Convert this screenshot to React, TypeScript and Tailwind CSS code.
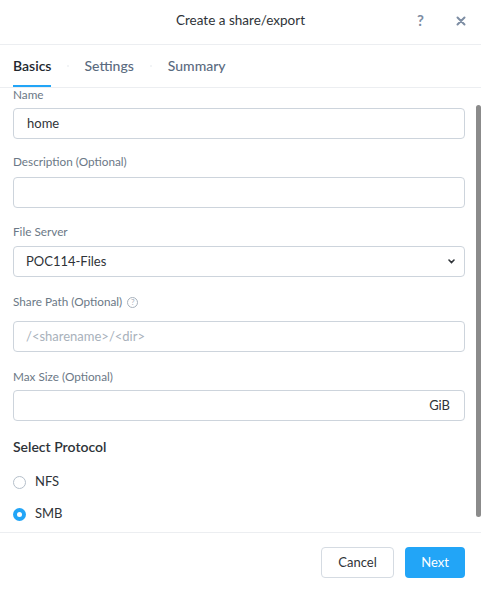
import React from "react";

const font = { fontFamily: "Lato, 'Open Sans', Arial, sans-serif" };

function Label({ children, className = "" }: { children: React.ReactNode; className?: string }) {
  return (
    <div className={`text-[11.75px] leading-[14px] text-[#6b7886] ${className}`}>{children}</div>
  );
}

function Box({ children, className = "" }: { children?: React.ReactNode; className?: string }) {
  return (
    <div
      className={`h-[31px] w-[452px] rounded-[4px] border border-[#cdd4dc] bg-white flex items-center px-[12px] text-[13px] text-[#2f3338] ${className}`}
    >
      {children}
    </div>
  );
}

export default function App() {
  return (
    <div className="w-[481px] h-[589px] bg-white flex flex-col overflow-hidden" style={font}>
      {/* Header */}
      <div className="h-[45px] border-b border-[#eceef1] flex items-center relative shrink-0">
        <div className="w-full text-center text-[13.5px] text-[#2e3338] pb-[4px]">Create a share/export</div>
        <div className="absolute left-[417px] top-[11px] text-[15px] leading-[18px] font-bold text-[#7d8da3]">?</div>
        <svg className="absolute left-[456px] top-[16px]" width="10" height="10" viewBox="0 0 10 10">
          <path d="M1.5 1.5 L8.5 8.5 M8.5 1.5 L1.5 8.5" stroke="#7d8da3" strokeWidth="2" strokeLinecap="round" />
        </svg>
      </div>

      {/* Tabs */}
      <div className="h-[43px] border-b border-[#eceef1] flex items-stretch px-[13px] shrink-0 text-[14px]">
        <div className="border-b-2 border-[#22a5f7] flex items-center font-semibold text-[#22272e] pt-[1px]">Basics</div>
        <div className="w-[33px] flex items-center justify-center">
          <div className="w-[2px] h-[2px] rounded-full bg-[#eef0f3]" />
        </div>
        <div className="flex items-center text-[#5b6b80] font-medium pb-[1px]">Settings</div>
        <div className="w-[34px] flex items-center justify-center">
          <div className="w-[2px] h-[2px] rounded-full bg-[#eef0f3]" />
        </div>
        <div className="flex items-center text-[#5b6b80] font-medium pb-[1px]">Summary</div>
      </div>

      {/* Body */}
      <div className="h-[444px] flex shrink-0">
        <div className="flex-1 pl-[13px] flex flex-col">
          <Label className="mt-[0px]">Name</Label>
          <Box className="mt-[6px] pl-[13px]">home</Box>

          <Label className="mt-[16px]">Description (Optional)</Label>
          <Box className="mt-[8px]" />

          <Label className="mt-[17px]">File Server</Label>
          <Box className="mt-[7px] justify-between pr-[9px]">
            <span>POC114-Files</span>
            <svg width="7" height="5" viewBox="0 0 7 5">
              <path d="M1 1 L3.5 3.5 L6 1" stroke="#2f3338" strokeWidth="1.6" fill="none" strokeLinecap="round" />
            </svg>
          </Box>

          <div className="mt-[17px] h-[16px] flex items-center text-[11.75px] text-[#6b7886]">
            <span>Share Path (Optional)</span>
            <span className="ml-[5px] w-[11px] h-[11px] rounded-full border border-[#a7b1bc] text-[#a7b1bc] text-[8px] leading-none flex items-center justify-center">
              ?
            </span>
          </div>
          <Box className="mt-[11px] text-[#a8b1bb]">/&lt;sharename&gt;/&lt;dir&gt;</Box>

          <Label className="mt-[18px]">Max Size (Optional)</Label>
          <Box className="mt-[6px] justify-end pr-[14px]">GiB</Box>

          <div className="mt-[16px] h-[18px] flex items-center text-[14px] font-semibold text-[#2e3338]">
            Select Protocol
          </div>

          <div className="mt-[18px] h-[18px] flex items-center text-[13px] text-[#2f3338]">
            <span className="w-[13px] h-[13px] rounded-full border border-[#b5bfca] bg-white" />
            <span className="ml-[9px]">NFS</span>
          </div>
          <div className="mt-[14px] h-[18px] flex items-center text-[13px] text-[#2f3338]">
            <span className="w-[13px] h-[13px] rounded-full bg-[#22a5f7] flex items-center justify-center">
              <span className="w-[5px] h-[5px] rounded-full bg-white" />
            </span>
            <span className="ml-[9px]">SMB</span>
          </div>
        </div>
        <div className="w-[5px] pt-[17px] pb-[15px] shrink-0">
          <div className="h-full w-[5px] rounded-[3px] bg-[#8b8b8b]" />
        </div>
      </div>

      {/* Footer */}
      <div className="border-t border-[#eceef1] flex-1 flex items-start justify-end pt-[14px] pr-[16px] gap-[11px]">
        <button className="h-[31px] w-[73px] rounded-[4px] border border-[#d5dbe2] bg-white text-[13px] text-[#2f3338]">
          Cancel
        </button>
        <button className="h-[31px] w-[60px] rounded-[4px] bg-[#22a5f7] text-[13px] text-white">Next</button>
      </div>
    </div>
  );
}
